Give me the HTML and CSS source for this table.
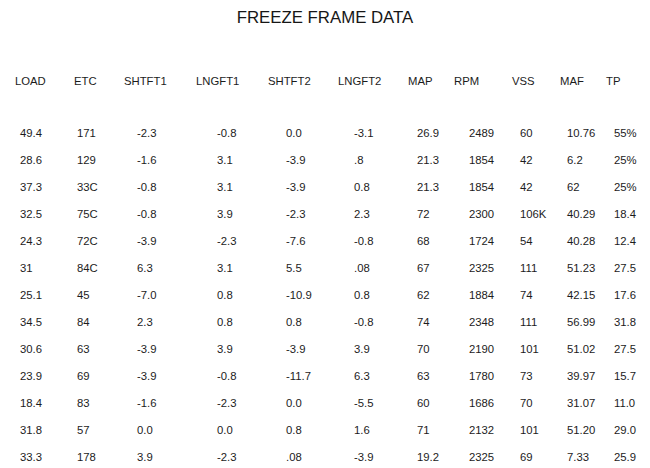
FILE: index.html
```html
<!DOCTYPE html>
<html>
<head>
<meta charset="utf-8">
<link rel="stylesheet" href="styles.css">
</head>
<body>
<div class="page">
  <h1 class="title">FREEZE FRAME DATA</h1>
  <div class="table">
    <div class="row head">
      <span>LOAD</span><span>ETC</span><span>SHTFT1</span><span>LNGFT1</span><span>SHTFT2</span><span>LNGFT2</span><span>MAP</span><span>RPM</span><span>VSS</span><span>MAF</span><span>TP</span>
    </div>
    <div class="body">
      <div class="row"><span>49.4</span><span>171</span><span>-2.3</span><span>-0.8</span><span>0.0</span><span>-3.1</span><span>26.9</span><span>2489</span><span>60</span><span>10.76</span><span>55%</span></div>
      <div class="row"><span>28.6</span><span>129</span><span>-1.6</span><span>3.1</span><span>-3.9</span><span>.8</span><span>21.3</span><span>1854</span><span>42</span><span>6.2</span><span>25%</span></div>
      <div class="row"><span>37.3</span><span>33C</span><span>-0.8</span><span>3.1</span><span>-3.9</span><span>0.8</span><span>21.3</span><span>1854</span><span>42</span><span>62</span><span>25%</span></div>
      <div class="row"><span>32.5</span><span>75C</span><span>-0.8</span><span>3.9</span><span>-2.3</span><span>2.3</span><span>72</span><span>2300</span><span>106K</span><span>40.29</span><span>18.4</span></div>
      <div class="row"><span>24.3</span><span>72C</span><span>-3.9</span><span>-2.3</span><span>-7.6</span><span>-0.8</span><span>68</span><span>1724</span><span>54</span><span>40.28</span><span>12.4</span></div>
      <div class="row"><span>31</span><span>84C</span><span>6.3</span><span>3.1</span><span>5.5</span><span>.08</span><span>67</span><span>2325</span><span>111</span><span>51.23</span><span>27.5</span></div>
      <div class="row"><span>25.1</span><span>45</span><span>-7.0</span><span>0.8</span><span>-10.9</span><span>0.8</span><span>62</span><span>1884</span><span>74</span><span>42.15</span><span>17.6</span></div>
      <div class="row"><span>34.5</span><span>84</span><span>2.3</span><span>0.8</span><span>0.8</span><span>-0.8</span><span>74</span><span>2348</span><span>111</span><span>56.99</span><span>31.8</span></div>
      <div class="row"><span>30.6</span><span>63</span><span>-3.9</span><span>3.9</span><span>-3.9</span><span>3.9</span><span>70</span><span>2190</span><span>101</span><span>51.02</span><span>27.5</span></div>
      <div class="row"><span>23.9</span><span>69</span><span>-3.9</span><span>-0.8</span><span>-11.7</span><span>6.3</span><span>63</span><span>1780</span><span>73</span><span>39.97</span><span>15.7</span></div>
      <div class="row"><span>18.4</span><span>83</span><span>-1.6</span><span>-2.3</span><span>0.0</span><span>-5.5</span><span>60</span><span>1686</span><span>70</span><span>31.07</span><span>11.0</span></div>
      <div class="row"><span>31.8</span><span>57</span><span>0.0</span><span>0.0</span><span>0.8</span><span>1.6</span><span>71</span><span>2132</span><span>101</span><span>51.20</span><span>29.0</span></div>
      <div class="row"><span>33.3</span><span>178</span><span>3.9</span><span>-2.3</span><span>.08</span><span>-3.9</span><span>19.2</span><span>2325</span><span>69</span><span>7.33</span><span>25.9</span></div>
    </div>
  </div>
</div>
</body>
</html>
```

FILE: styles.css
```css
html, body {
  margin: 0;
  padding: 0;
  background: #ffffff;
}

.page {
  width: 650px;
  font-family: "Liberation Sans", Arial, sans-serif;
  color: #1c1c1c;
  padding-top: 8px;
}

.title {
  margin: 0;
  font-size: 16.8px;
  font-weight: normal;
  line-height: 20px;
  text-align: center;
  color: #161616;
}

.table {
  margin-top: 40px;
  padding-left: 15px;
}

.row {
  display: grid;
  grid-template-columns: 59px 50px 72px 72px 70px 70px 46px 58px 48px 46px 1fr;
  height: 27px;
  line-height: 27px;
  font-size: 11.3px;
  white-space: nowrap;
}

.head {
  margin-bottom: 24.5px;
}

.body .row > :nth-child(1) { padding-left: 5px; }
.body .row > :nth-child(2) { padding-left: 3px; }
.body .row > :nth-child(3) { padding-left: 13px; }
.body .row > :nth-child(4) { padding-left: 21px; }
.body .row > :nth-child(5) { padding-left: 18px; }
.body .row > :nth-child(6) { padding-left: 16px; }
.body .row > :nth-child(7) { padding-left: 9px; }
.body .row > :nth-child(8) { padding-left: 15px; }
.body .row > :nth-child(9) { padding-left: 8px; }
.body .row > :nth-child(10) { padding-left: 7px; }
.body .row > :nth-child(11) { padding-left: 8px; }
```
